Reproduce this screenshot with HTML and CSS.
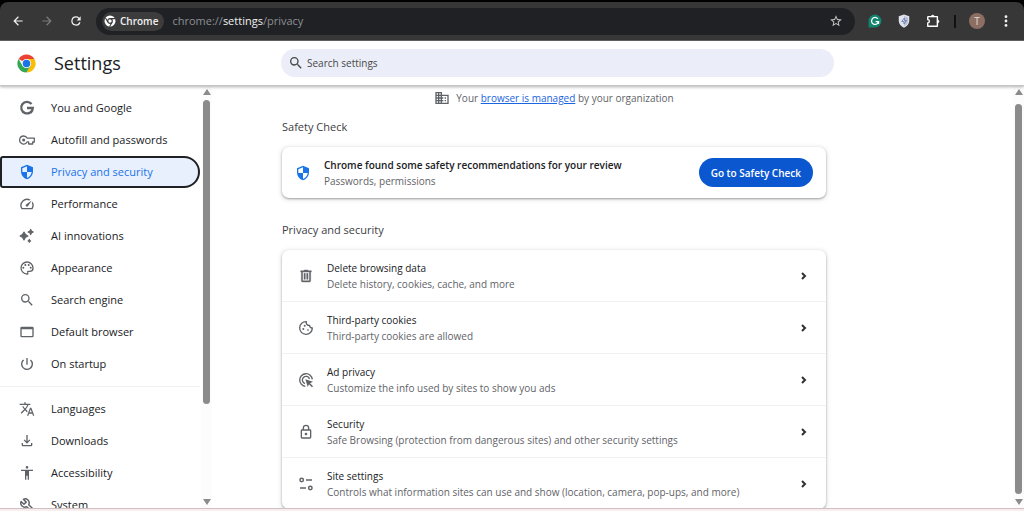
FILE: index.html
```html
<!DOCTYPE html>
<html lang="en">
<head>
    <meta charset="UTF-8">
    <meta name="viewport" content="width=device-width, initial-scale=1.0">
    <title>Settings - Privacy and security</title>
    <link rel="stylesheet" href="styles.css">
</head>
<body>
    <!-- Browser toolbar -->
    <div class="tab-strip">
    <div class="toolbar">
        <div class="nav-buttons">
            <button class="tool-btn" aria-label="Back">
                <svg viewBox="0 0 24 24"><path d="M20 11H7.83l5.59-5.59L12 4l-8 8 8 8 1.41-1.41L7.83 13H20z"/></svg>
            </button>
            <button class="tool-btn dim" aria-label="Forward">
                <svg viewBox="0 0 24 24"><path d="M12 4l-1.41 1.41L16.17 11H4v2h12.17l-5.58 5.59L12 20l8-8z"/></svg>
            </button>
            <button class="tool-btn" aria-label="Reload">
                <svg viewBox="0 0 24 24"><path d="M17.65 6.35A7.96 7.96 0 0 0 12 4a8 8 0 1 0 7.73 10h-2.4A5.8 5.8 0 1 1 12 6.2c1.66 0 3.14.69 4.22 1.78L13 11h7V4z"/></svg>
            </button>
        </div>
        <div class="address-bar">
            <span class="chip">
                <svg viewBox="0 0 24 24"><circle cx="12" cy="12" r="11" fill="#fff"/><circle cx="12" cy="12" r="4.6" fill="none" stroke="#3c3c3c" stroke-width="2.4"/><path d="M12 7.2h10M7.9 14.4L3 6M16.1 14.4L11.2 23" fill="none" stroke="#3c3c3c" stroke-width="2.2"/></svg>
                Chrome
            </span>
            <span class="url">chrome://<b>settings</b>/privacy</span>
            <button class="tool-btn star" aria-label="Bookmark this tab">
                <svg viewBox="0 0 24 24"><path d="M22 9.24l-7.19-.62L12 2 9.19 8.63 2 9.24l5.46 4.73L5.82 21 12 17.27 18.18 21l-1.63-7.03zM12 15.4l-3.76 2.27 1-4.28-3.32-2.88 4.38-.38L12 6.1l1.71 4.04 4.38.38-3.32 2.88 1 4.28z"/></svg>
            </button>
        </div>
        <div class="extensions">
            <button class="tool-btn" aria-label="Grammar checker">
                <svg viewBox="0 0 24 24"><path d="M12 1a11 11 0 1 1 0 22H1V12A11 11 0 0 1 12 1z" fill="#12856f"/><path d="M16.8 8.2A6 6 0 1 0 18 13h-5M18 13v4" fill="none" stroke="#fff" stroke-width="2.2"/></svg>
            </button>
            <button class="tool-btn" aria-label="Ad blocker">
                <svg viewBox="0 0 24 24"><path d="M12 1l9 3v8c0 5-4 9-9 11.500C7 21 3 17 3 12V4z" fill="#dfe3ee"/><path d="M12 3.500l7 2.300v6.200c0 4-3 7-7 9z" fill="#b9c1d6"/><path d="M12.500 7L8 13h4v4l4.500-6H13z" fill="none" stroke="#6d7fae" stroke-width="1.600"/></svg>
            </button>
            <button class="tool-btn" aria-label="Extensions">
                <svg viewBox="0 0 24 24"><path d="M2.500 4.500h7M3 4.500v5.200a2.600 2.600 0 0 1 0 5.600V21h16.500V4.500H3" fill="none" stroke="#fff" stroke-width="2.400" stroke-linejoin="round"/><path d="M9 4.500a2.600 2.600 0 0 1 5.200 0zM19.500 10a2.700 2.700 0 0 1 0 5.400z" fill="#fff" stroke="#fff"/></svg>
            </button>
            <span class="separator"></span>
            <button class="avatar" aria-label="Profile">T</button>
            <button class="tool-btn" aria-label="Menu">
                <svg viewBox="0 0 24 24"><circle cx="12" cy="4.500" r="2.400"/><circle cx="12" cy="12" r="2.400"/><circle cx="12" cy="19.500" r="2.400"/></svg>
            </button>
        </div>
    </div>
    </div>

    <header>
        <div class="brand">
            <svg class="logo" viewBox="0 0 48 48">
                <path d="M24 24L4.080 12.500A23 23 0 0 1 43.920 12.500z" fill="#ea4335"/>
                <path d="M24 12.500h19.920A23 23 0 0 1 24 47L34 29.750z" fill="#fbbc04"/>
                <path d="M4.080 12.500A23 23 0 0 0 24 47L34 29.750L24 35 14 29.750z" fill="#34a853"/>
                <circle cx="24" cy="24" r="11.500" fill="#fff"/>
                <circle cx="24" cy="24" r="9.500" fill="#1a73e8"/>
            </svg>
            <h1>Settings</h1>
        </div>
        <label class="search" for="searchInput">
            <svg viewBox="0 0 24 24"><path d="M15.500 14h-.79l-.28-.27A6.470 6.470 0 0 0 16 9.500 6.500 6.500 0 1 0 9.500 16c1.610 0 3.090-.59 4.230-1.570l.27.28v.79l5 4.990L20.490 19zm-6 0a4.500 4.500 0 1 1 0-9 4.500 4.500 0 0 1 0 9z"/></svg>
            <input type="text" id="searchInput" placeholder="Search settings">
        </label>
    </header>

    <div class="page">
        <nav class="sidebar">
            <div class="menu">
                <a href="#people">
                    <svg viewBox="0 0 24 24"><path d="M18.800 6A8.700 8.700 0 1 0 20.700 12H12M20.700 12c0 3.500-1.500 5.500-3 7" fill="none" stroke="currentColor" stroke-width="3.400"/></svg>
                    You and Google
                </a>
                <a href="#autofill">
                    <svg viewBox="0 0 24 24"><path d="M7 6a6 6 0 1 0 5.300 8.700h2.200V18h6V15H23V9.300H12.300A6 6 0 0 0 7 6z" fill="none" stroke="currentColor" stroke-width="1.900" stroke-linejoin="round"/><circle cx="7" cy="12" r="2.300"/></svg>
                    Autofill and passwords
                </a>
                <a href="#privacy" class="selected">
                    <svg viewBox="0 0 24 24"><path d="M12 1L3 5v6c0 5.550 3.840 10.740 9 12 5.160-1.260 9-6.450 9-12V5zm0 10.990h7c-.53 4.120-3.280 7.790-7 8.940V12H5V6.300l7-3.110z"/></svg>
                    Privacy and security
                </a>
                <a href="#performance">
                    <svg viewBox="0 0 24 24"><path d="M20.380 8.570l-1.230 1.850a8 8 0 0 1-.22 7.580H5.070A8 8 0 0 1 15.580 6.850l1.850-1.230A10 10 0 0 0 3.350 19a2 2 0 0 0 1.720 1h13.850a2 2 0 0 0 1.740-1 10 10 0 0 0-.27-10.440zM10.590 15.410a2 2 0 0 0 2.830 0l5.660-8.490-8.490 5.660a2 2 0 0 0 0 2.830z"/></svg>
                    Performance
                </a>
                <a href="#ai">
                    <svg viewBox="0 0 24 24"><path d="M7.500 6q1.500 4.500 6 6-4.500 1.500-6 6-1.500-4.500-6-6 4.500-1.500 6-6zM17.500 2q.6 3.400 4 4-3.400.6-4 4-.6-3.400-4-4 3.400-.6 4-4zM15.500 17q.5 2 2 2.500-1.500.5-2 2-.5-1.500-2-2 1.500-.5 2-2.500z" stroke="currentColor" stroke-width="1.600" stroke-linejoin="round"/></svg>
                    AI innovations
                </a>
                <a href="#appearance">
                    <svg viewBox="0 0 24 24"><path d="M12 22a10 10 0 1 1 10-9c0 3.300-2.700 5-6 5h-1.800c-.3 0-.5.2-.5.500 0 .9.600 1 .600 1.700A1.900 1.900 0 0 1 12 22zm0-18a8 8 0 1 0 0 16c.3 0 .5-.2.500-.5 0-.5-.6-.6-.6-1.700A2.300 2.300 0 0 1 14.200 16H16c2.200 0 4-1.500 4-4 0-4.500-3.600-8-8-8z"/><circle cx="6.500" cy="11.500" r="1.500"/><circle cx="9.500" cy="7.500" r="1.500"/><circle cx="14.500" cy="7.500" r="1.500"/><circle cx="17.500" cy="11.500" r="1.500"/></svg>
                    Appearance
                </a>
                <a href="#search">
                    <svg viewBox="0 0 24 24"><path d="M15.500 14h-.79l-.28-.27A6.470 6.470 0 0 0 16 9.500 6.500 6.500 0 1 0 9.500 16c1.610 0 3.090-.59 4.230-1.570l.27.28v.79l5 4.990L20.490 19zm-6 0a4.500 4.500 0 1 1 0-9 4.500 4.500 0 0 1 0 9z"/></svg>
                    Search engine
                </a>
                <a href="#defaultBrowser">
                    <svg viewBox="0 0 24 24"><path d="M20 4H4a2 2 0 0 0-2 2v12a2 2 0 0 0 2 2h16a2 2 0 0 0 2-2V6a2 2 0 0 0-2-2zm0 14H4V8h16z"/></svg>
                    Default browser
                </a>
                <a href="#onStartup">
                    <svg viewBox="0 0 24 24"><path d="M13 3h-2v10h2zm4.830 2.170l-1.420 1.420A6.920 6.920 0 0 1 19 12a7 7 0 1 1-11.420-5.420L6.170 5.170A9 9 0 1 0 21 12a8.940 8.940 0 0 0-3.170-6.830z"/></svg>
                    On startup
                </a>
                <hr>
                <a href="#languages">
                    <svg viewBox="0 0 24 24"><path d="M12.870 15.070l-2.540-2.510.03-.03A17.520 17.520 0 0 0 14.070 6H17V4h-7V2H8v2H1v2h11.170A15.900 15.900 0 0 1 9 11.350 15.650 15.650 0 0 1 6.690 8h-2a17.600 17.600 0 0 0 2.980 4.560l-5.090 5.020L4 19l5-5 3.110 3.110zM18.500 10h-2L12 22h2l1.120-3h4.750L21 22h2zm-2.620 7l1.620-4.330L19.120 17z"/></svg>
                    Languages
                </a>
                <a href="#downloads">
                    <svg viewBox="0 0 24 24"><path d="M12 16l-5-5 1.400-1.400 2.600 2.600V3h2v9.200l2.600-2.600L17 11zM4 15v3a2 2 0 0 0 2 2h12a2 2 0 0 0 2-2v-3h-2v3H6v-3z"/></svg>
                    Downloads
                </a>
                <a href="#accessibility">
                    <svg viewBox="0 0 24 24"><path d="M12 1.500a2 2 0 1 1 0 4 2 2 0 0 1 0-4zM21 9h-6v13h-2v-6h-2v6H9V9H3V7h18z"/></svg>
                    Accessibility
                </a>
                <a href="#system">
                    <svg viewBox="0 0 24 24"><path d="M6.500 3.500A6 6 0 0 1 14.600 11.500l6.200 6.200-3 3-6.300-6.200A6 6 0 0 1 3.200 6.800l4.300 4.200 3.300-3.300z" fill="none" stroke="currentColor" stroke-width="2.200" stroke-linejoin="round"/></svg>
                    System
                </a>
            </div>
            <div class="scrollbar">
                <svg viewBox="0 0 8 6"><path d="M4 0l4 6H0z"/></svg>
                <span class="thumb"></span>
                <svg viewBox="0 0 8 6"><path d="M0 0h8L4 6z"/></svg>
            </div>
        </nav>

        <main>
            <div class="content">
                <p class="managed">
                    <svg viewBox="0 0 24 24"><path d="M12 7V3H2v18h20V7zM6 19H4v-2h2zm0-4H4v-2h2zm0-4H4V9h2zm0-4H4V5h2zm4 12H8v-2h2zm0-4H8v-2h2zm0-4H8V9h2zm0-4H8V5h2zm10 12h-8v-2h2v-2h-2v-2h2v-2h-2V9h8zm-2-8h-2v2h2zm0 4h-2v2h2z"/></svg>
                    <span>Your <a href="#management">browser is managed</a> by your organization</span>
                </p>

                <h2>Safety Check</h2>
                <section class="card safety">
                    <svg viewBox="0 0 24 24"><path d="M12 1L3 5v6c0 5.550 3.840 10.740 9 12 5.160-1.260 9-6.450 9-12V5zm0 10.990h7c-.53 4.120-3.280 7.790-7 8.940V12H5V6.300l7-3.110z"/></svg>
                    <div class="text">
                        <strong>Chrome found some safety recommendations for your review</strong>
                        <small>Passwords, permissions</small>
                    </div>
                    <button class="primary">Go to Safety Check</button>
                </section>

                <h2>Privacy and security</h2>
                <section class="card list">
                    <button class="row">
                        <svg viewBox="0 0 24 24"><path d="M15 4V3H9v1H4v2h1v13a2 2 0 0 0 2 2h10a2 2 0 0 0 2-2V6h1V4zm2 15H7V6h10zM9 8h2v9H9zm4 0h2v9h-2z" stroke="currentColor" stroke-width=".6"/></svg>
                        <span class="text"><span>Delete browsing data</span><small>Delete history, cookies, cache, and more</small></span>
                        <svg class="chevron" viewBox="0 0 8 12"><path d="M2 3l3 3-3 3"/></svg>
                    </button>
                    <button class="row">
                        <svg viewBox="0 0 24 24"><path d="M12.500 2.500a9.500 9.500 0 1 0 9 9.500 3.500 3.500 0 0 1-4-4 4.300 4.300 0 0 1-5-5.500z" fill="none" stroke="currentColor" stroke-width="2" stroke-linejoin="round"/><circle cx="10" cy="8.500" r="1.500"/><circle cx="8" cy="13.500" r="1.500"/><circle cx="15" cy="15" r="1.300"/></svg>
                        <span class="text"><span>Third-party cookies</span><small>Third-party cookies are allowed</small></span>
                        <svg class="chevron" viewBox="0 0 8 12"><path d="M2 3l3 3-3 3"/></svg>
                    </button>
                    <button class="row">
                        <svg viewBox="0 0 24 24"><path d="M11 21.500A9.500 9.500 0 1 1 21.500 11M10.500 17.300A5.500 5.500 0 1 1 17.300 10.500" fill="none" stroke="currentColor" stroke-width="2"/><path d="M11 11l11.500 3.800-4.400 1.900 4.500 4.500-1.700 1.700-4.500-4.500-1.800 4.200z"/></svg>
                        <span class="text"><span>Ad privacy</span><small>Customize the info used by sites to show you ads</small></span>
                        <svg class="chevron" viewBox="0 0 8 12"><path d="M2 3l3 3-3 3"/></svg>
                    </button>
                    <button class="row">
                        <svg viewBox="0 0 24 24"><path d="M18 8h-1V6A5 5 0 0 0 7 6v2H6a2 2 0 0 0-2 2v10a2 2 0 0 0 2 2h12a2 2 0 0 0 2-2V10a2 2 0 0 0-2-2zM9 6a3 3 0 0 1 6 0v2H9zm9 14H6V10h12zm-6-3a2 2 0 1 0 0-4 2 2 0 0 0 0 4z"/></svg>
                        <span class="text"><span>Security</span><small>Safe Browsing (protection from dangerous sites) and other security settings</small></span>
                        <svg class="chevron" viewBox="0 0 8 12"><path d="M2 3l3 3-3 3"/></svg>
                    </button>
                    <button class="row">
                        <svg viewBox="0 0 24 24"><path d="M12 6h9M3 18h9" fill="none" stroke="currentColor" stroke-width="2.200"/><circle cx="5.500" cy="6" r="2.600" fill="none" stroke="currentColor" stroke-width="2.200"/><circle cx="18.500" cy="18" r="2.600" fill="none" stroke="currentColor" stroke-width="2.200"/></svg>
                        <span class="text"><span>Site settings</span><small>Controls what information sites can use and show (location, camera, pop-ups, and more)</small></span>
                        <svg class="chevron" viewBox="0 0 8 12"><path d="M2 3l3 3-3 3"/></svg>
                    </button>
                </section>
            </div>
            <div class="scrollbar">
                <svg viewBox="0 0 8 6"><path d="M4 0l4 6H0z"/></svg>
                <span class="thumb"></span>
                <svg viewBox="0 0 8 6"><path d="M0 0h8L4 6z"/></svg>
            </div>
        </main>
    </div>
</body>
</html>
```

FILE: styles.css
```css
* {
    box-sizing: border-box;
}

body {
    margin: 0;
    height: 100vh;
    display: flex;
    flex-direction: column;
    overflow: hidden;
    background-color: #fff;
    border-bottom: 2px solid #f8eeee;
    font-family: "Open Sans", "Noto Sans", sans-serif;
    font-size: 10px;
    line-height: 16px;
    color: #303134;
}

svg {
    width: 16px;
    height: 16px;
    flex: none;
    fill: currentColor;
}

button {
    font-family: inherit;
    font-size: inherit;
    line-height: inherit;
    color: inherit;
    border: none;
    background: none;
    padding: 0;
    cursor: pointer;
}

/* toolbar */
.tab-strip {
    flex: none;
    padding-top: 2px;
    background-color: #000;
}

.toolbar {
    height: 39px;
    display: flex;
    align-items: center;
    gap: 12px;
    padding: 0 10px;
    background-color: #373737;
    border-bottom: 1px solid #666;
    border-radius: 8px 8px 0 0;
    color: #f1f1f1;
}

.nav-buttons,
.extensions {
    display: flex;
    align-items: center;
    gap: 13px;
}

.tool-btn {
    display: flex;
    width: 16px;
    height: 16px;
    align-items: center;
    justify-content: center;
}

.tool-btn svg {
    width: 14px;
    height: 14px;
}

.dim {
    color: #7d7d7d;
}

.address-bar {
    flex: 1;
    height: 27px;
    display: flex;
    align-items: center;
    gap: 8px;
    padding: 0 11px 0 6px;
    border-radius: 14px;
    background-color: #202124;
}

.chip {
    display: flex;
    align-items: center;
    gap: 4px;
    height: 19px;
    padding: 0 6px 0 2px;
    border-radius: 10px;
    background-color: #3c3c3c;
    font-weight: 600;
}

.chip svg {
    width: 12px;
    height: 12px;
}

.url {
    font-size: 11px;
    color: #8d9094;
}

.url b {
    font-weight: 400;
    color: #f1f1f1;
}

.star {
    margin-left: auto;
    color: #c7c7c7;
}

.separator {
    width: 2px;
    height: 13px;
    background-color: #111;
}

.avatar {
    width: 16px;
    height: 16px;
    border-radius: 50%;
    background-color: #8d6e63;
    color: #e6dcd8;
}

/* settings header */
header {
    flex: none;
    height: 45px;
    display: flex;
    align-items: center;
    border-bottom: 1px solid #c4c6c5;
    box-shadow: 0 1px 3px rgba(0, 0, 0, 0.3);
    position: relative;
    z-index: 1;
}

.brand {
    flex: none;
    width: 281px;
    display: flex;
    align-items: center;
    gap: 18px;
    padding-left: 17px;
}

.logo {
    width: 19px;
    height: 19px;
}

h1 {
    margin: 0;
    font-size: 18px;
    line-height: 24px;
    font-weight: 500;
    color: #202124;
}

.search {
    flex: 1;
    max-width: 553px;
    height: 28px;
    display: flex;
    align-items: center;
    gap: 1px;
    padding: 0 7px;
    border-radius: 14px;
    background-color: #ebeef8;
    color: #474747;
}

.search input {
    flex: 1;
    min-width: 0;
    border: none;
    outline: none;
    background: none;
    font-family: inherit;
    font-size: 10px;
}

.search input::placeholder {
    color: #474747;
}

/* sidebar */
.page {
    flex: 1;
    min-height: 0;
    display: flex;
    border-bottom: 1px solid #d0bfc2;
}

.sidebar {
    flex: none;
    width: 212px;
    display: flex;
    overflow: hidden;
}

.menu {
    flex: 1;
    padding: 6px 1px 0 0;
}

.menu a {
    display: flex;
    align-items: center;
    gap: 16px;
    height: 32px;
    padding-left: 19px;
    font-size: 11px;
    font-weight: 500;
    color: #202124;
    text-decoration: none;
}

.menu svg {
    color: #5f6368;
}

.menu .selected {
    padding-left: 17px;
    border: 2px solid #202124;
    border-radius: 3px 16px 16px 3px;
    background-color: #e8f0fe;
    color: #1a73e8;
}

.menu .selected svg {
    color: #1a73e8;
}

.menu hr {
    margin: 6px 0;
    border: none;
    border-top: 1px solid #f0f0f0;
}

.scrollbar {
    flex: none;
    width: 11px;
    display: flex;
    flex-direction: column;
    align-items: center;
    gap: 5px;
    padding: 3px 0;
    background-color: #fcfcfc;
    color: #8b8b8b;
}

.scrollbar svg {
    width: 8px;
    height: 6px;
}

.scrollbar svg:last-child {
    margin-top: auto;
}

.thumb {
    width: 7px;
    height: 73%;
    border-radius: 4px;
    background-color: #8b8b8b;
}

main .thumb {
    height: auto;
    flex: 1;
    margin-top: 4px;
}

/* main content */
main {
    flex: 1;
    display: flex;
    justify-content: space-between;
    overflow: hidden;
}

.content {
    flex: 1;
    max-width: 614px;
    padding-left: 70px;
}

.managed {
    display: flex;
    align-items: center;
    justify-content: center;
    gap: 6px;
    margin: 4px 0 0;
    color: #5f6368;
}

.managed a {
    color: #1a65e0;
}

h2 {
    margin: 0;
    padding: 13px 0 12px;
    font-size: 11px;
    line-height: 16px;
    font-weight: 400;
    color: #3c4043;
}

.card {
    margin-bottom: 11px;
    border-radius: 7px;
    background-color: #fff;
    box-shadow: 0 1px 2px rgba(60, 64, 67, 0.4), 0 1px 4px 1px rgba(60, 64, 67, 0.15);
}

.safety {
    display: flex;
    align-items: center;
    gap: 13px;
    height: 51px;
    padding: 0 13px;
}

.safety > svg {
    color: #1a73e8;
}

.text {
    flex: 1;
    display: flex;
    flex-direction: column;
    text-align: left;
}

.text strong {
    font-weight: 600;
    color: #202124;
}

.text small {
    font-size: 10px;
    color: #5f6368;
}

.primary {
    height: 29px;
    padding: 0 12px;
    border-radius: 15px;
    background-color: #0b57d0;
    color: #fff;
    font-weight: 600;
}

.row {
    width: 100%;
    height: 52px;
    display: flex;
    align-items: center;
    gap: 13px;
    padding: 0 18px 0 16px;
    border-bottom: 1px solid #f1f1f1;
    color: #202124;
}

.row:last-child {
    height: 51px;
    border-bottom: none;
}

.row > svg {
    color: #5f6368;
}

.row .chevron {
    width: 8px;
    height: 12px;
    fill: none;
    stroke: #303134;
    stroke-width: 2;
}
```
